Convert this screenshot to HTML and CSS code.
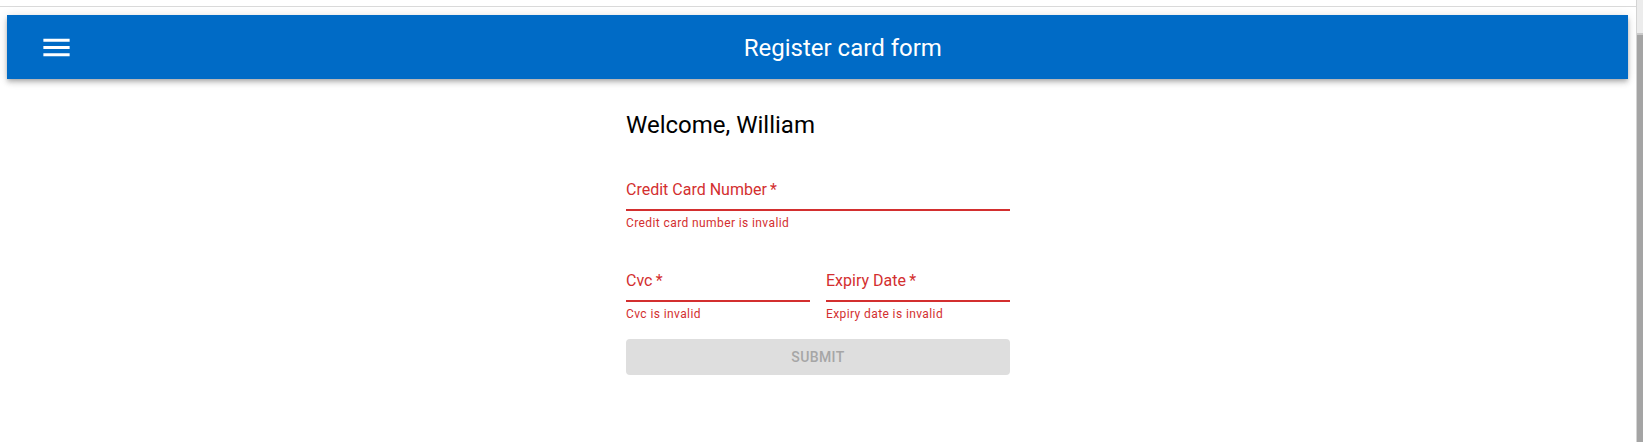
FILE: index.html
```html
<!DOCTYPE html>
<html lang="en">
<head>
<meta charset="utf-8">
<title>Register card form</title>
<link rel="stylesheet" href="styles.css">
</head>
<body>
<div class="window">
  <div class="viewport">
    <div class="chrome-top"></div>
    <div class="page">
      <header class="appbar">
        <button class="menu-btn" aria-label="menu">
          <svg class="menu-icon" viewBox="0 0 24 24" width="35" height="35"><path fill="#fff" d="M3 18h18v-2H3v2zm0-5h18v-2H3v2zm0-7v2h18V6H3z"/></svg>
        </button>
        <h1 class="title">Register card form</h1>
      </header>
      <main class="content">
        <form class="form">
          <h2 class="welcome">Welcome, William</h2>
          <div class="field field-first">
            <label class="label">Credit Card Number&#8201;*</label>
            <div class="underline"></div>
            <p class="helper">Credit card number is invalid</p>
          </div>
          <div class="row">
            <div class="field">
              <label class="label">Cvc&#8201;*</label>
              <div class="underline"></div>
              <p class="helper">Cvc is invalid</p>
            </div>
            <div class="field">
              <label class="label">Expiry Date&#8201;*</label>
              <div class="underline"></div>
              <p class="helper">Expiry date is invalid</p>
            </div>
          </div>
          <button type="button" class="submit" disabled>Submit</button>
        </form>
      </main>
    </div>
  </div>
  <div class="scrollbar"><div class="thumb"></div></div>
</div>
</body>
</html>
```

FILE: styles.css
```css
* { box-sizing: border-box; }
html, body {
  margin: 0;
  padding: 0;
  height: 442px;
  overflow: hidden;
  background: #fff;
  font-family: Roboto, "Liberation Sans", sans-serif;
}
.window {
  display: flex;
  height: 442px;
}
.viewport {
  flex: 1;
  min-width: 0;
}
.chrome-top {
  height: 7px;
  border-bottom: 1px solid #dadada;
}
.page {
  padding: 8px 8px 0 7px;
}
.appbar {
  height: 64px;
  background: #006bc6;
  display: flex;
  align-items: center;
  padding: 0 24px 0 24px;
  box-shadow: 0px 2px 4px -1px rgba(0,0,0,0.2), 0px 4px 5px 0px rgba(0,0,0,0.14), 0px 1px 10px 0px rgba(0,0,0,0.12);
}
.menu-btn {
  background: none;
  border: 0;
  padding: 12px 12px 12px 7.6px;
  margin: 0;
  display: flex;
  cursor: pointer;
}
.menu-icon { display: block; }
.title {
  flex: 1;
  margin: 0;
  text-align: center;
  color: #fff;
  font-size: 24px;
  font-weight: 400;
  line-height: 32px;
  padding: 2px 4px 0 0;
}
.content {
  display: flex;
  justify-content: center;
  padding-top: 30px;
}
.form {
  width: 384px;
  margin-left: 1px;
}
.welcome {
  margin: 0;
  font-size: 24px;
  font-weight: 400;
  line-height: 32px;
  color: #000;
}
.field-first { margin-top: 39px; }
.label {
  display: block;
  color: #d32f2f;
  font-size: 16px;
  line-height: 20px;
}
.underline {
  height: 2px;
  margin-top: 9px;
  background: #d32f2f;
}
.helper {
  margin: 4px 0 0;
  color: #d32f2f;
  font-size: 12px;
  line-height: 16px;
  letter-spacing: 0.4px;
}
.row {
  display: grid;
  grid-template-columns: 1fr 1fr;
  column-gap: 16px;
  margin-top: 40px;
}
.submit {
  display: block;
  width: 100%;
  height: 36px;
  margin-top: 17px;
  border: 0;
  border-radius: 4px;
  background: #dedede;
  color: #a6a6a6;
  font-family: Roboto, "Liberation Sans", sans-serif;
  font-size: 14px;
  font-weight: 500;
  letter-spacing: 0.4px;
  text-transform: uppercase;
}
.scrollbar {
  width: 7px;
  flex: none;
  background: #ececec;
  border-left: 1px solid #d4d4d4;
  padding-top: 33px;
}
.thumb {
  height: 100%;
  background: #a4a4a4;
  border-top: 2px solid #c9c9c9;
}
```
